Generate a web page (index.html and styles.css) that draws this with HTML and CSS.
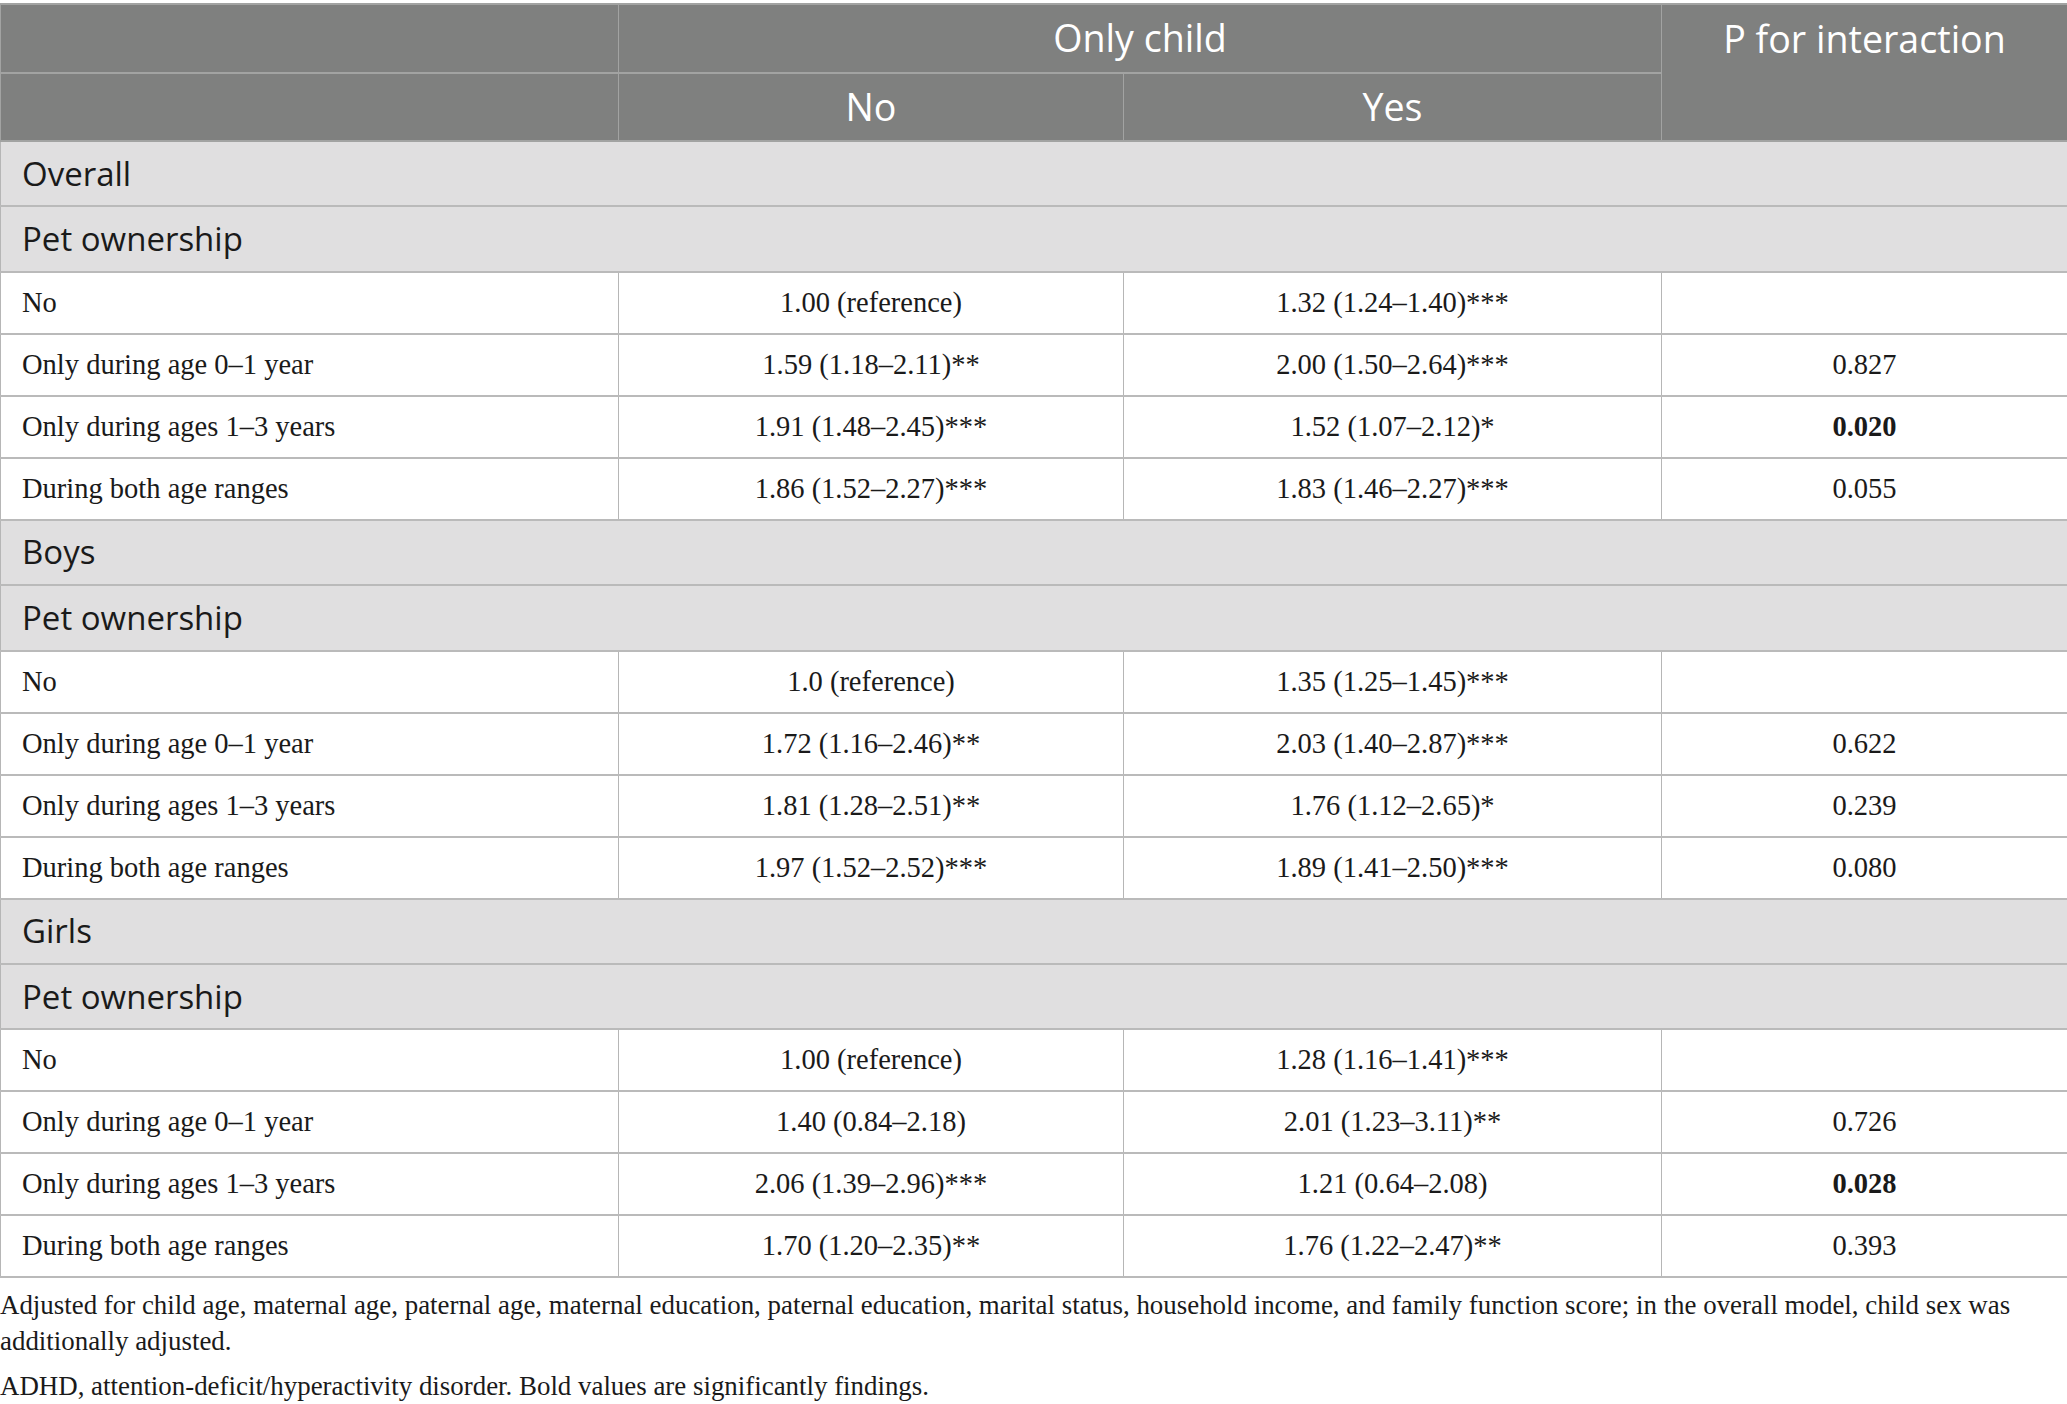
FILE: index.html
```html
<!DOCTYPE html>
<html>
<head>
<meta charset="utf-8">
<link rel="stylesheet" href="styles.css">
</head>
<body>
<div class="wrap">
<table class="tbl">
  <colgroup>
    <col class="c1"><col class="c2"><col class="c3"><col class="c4">
  </colgroup>
  <thead>
    <tr>
      <th class="blank"></th>
      <th colspan="2">Only child</th>
      <th rowspan="2" class="ptop">P for interaction</th>
    </tr>
    <tr>
      <th class="blank"></th>
      <th>No</th>
      <th>Yes</th>
    </tr>
  </thead>
  <tbody>
    <tr class="group"><td colspan="4">Overall</td></tr>
    <tr class="group"><td colspan="4">Pet ownership</td></tr>
    <tr><td class="lbl">No</td><td>1.00 (reference)</td><td>1.32 (1.24–1.40)***</td><td></td></tr>
    <tr><td class="lbl">Only during age 0–1 year</td><td>1.59 (1.18–2.11)**</td><td>2.00 (1.50–2.64)***</td><td>0.827</td></tr>
    <tr><td class="lbl">Only during ages 1–3 years</td><td>1.91 (1.48–2.45)***</td><td>1.52 (1.07–2.12)*</td><td class="b">0.020</td></tr>
    <tr><td class="lbl">During both age ranges</td><td>1.86 (1.52–2.27)***</td><td>1.83 (1.46–2.27)***</td><td>0.055</td></tr>
    <tr class="group"><td colspan="4">Boys</td></tr>
    <tr class="group"><td colspan="4">Pet ownership</td></tr>
    <tr><td class="lbl">No</td><td>1.0 (reference)</td><td>1.35 (1.25–1.45)***</td><td></td></tr>
    <tr><td class="lbl">Only during age 0–1 year</td><td>1.72 (1.16–2.46)**</td><td>2.03 (1.40–2.87)***</td><td>0.622</td></tr>
    <tr><td class="lbl">Only during ages 1–3 years</td><td>1.81 (1.28–2.51)**</td><td>1.76 (1.12–2.65)*</td><td>0.239</td></tr>
    <tr><td class="lbl">During both age ranges</td><td>1.97 (1.52–2.52)***</td><td>1.89 (1.41–2.50)***</td><td>0.080</td></tr>
    <tr class="group"><td colspan="4">Girls</td></tr>
    <tr class="group"><td colspan="4">Pet ownership</td></tr>
    <tr><td class="lbl">No</td><td>1.00 (reference)</td><td>1.28 (1.16–1.41)***</td><td></td></tr>
    <tr><td class="lbl">Only during age 0–1 year</td><td>1.40 (0.84–2.18)</td><td>2.01 (1.23–3.11)**</td><td>0.726</td></tr>
    <tr><td class="lbl">Only during ages 1–3 years</td><td>2.06 (1.39–2.96)***</td><td>1.21 (0.64–2.08)</td><td class="b">0.028</td></tr>
    <tr><td class="lbl">During both age ranges</td><td>1.70 (1.20–2.35)**</td><td>1.76 (1.22–2.47)**</td><td>0.393</td></tr>
  </tbody>
</table>
<div class="notes">
  <p>Adjusted for child age, maternal age, paternal age, maternal education, paternal education, marital status, household income, and family function score; in the overall model, child sex was additionally adjusted.</p>
  <p>ADHD, attention-deficit/hyperactivity disorder. Bold values are significantly findings.</p>
</div>
</div>
</body>
</html>
```
FILE: styles.css
```css
html, body {
  margin: 0;
  padding: 0;
  background: #ffffff;
}

.wrap {
  padding-top: 3px;
  width: 2067px;
}

.tbl {
  width: 2067px;
  border-collapse: collapse;
  table-layout: fixed;
  color: #1a1a1a;
}

.c1 { width: 618px; }
.c2 { width: 505px; }
.c3 { width: 538px; }
.c4 { width: 406px; }

.tbl th {
  background: #7f807f;
  color: #ffffff;
  font-family: "Open Sans", "Noto Sans", sans-serif;
  font-weight: 400;
  font-size: 37.6px;
  line-height: 48px;
  height: 66.5px;
  padding: 0 10px;
  border-top: 2px solid #a2a3a2;
  border-bottom: 2px solid #a2a3a2;
  border-left: 1px solid #a2a3a2;
  border-right: 1px solid #a2a3a2;
  text-align: center;
  vertical-align: middle;
}

.tbl th.ptop {
  vertical-align: top;
  padding-top: 10px;
}

.tbl td {
  font-family: "Liberation Serif", "Times New Roman", serif;
  font-size: 28.5px;
  line-height: 36px;
  height: 60px;
  padding: 0 10px;
  border-top: 2px solid #bababa;
  border-bottom: 2px solid #bababa;
  border-left: 1px solid #b6b6b6;
  border-right: 1px solid #b6b6b6;
  text-align: center;
  vertical-align: middle;
}

.tbl td.lbl {
  text-align: left;
  padding-left: 21px;
}

.tbl td.b {
  font-weight: 700;
}

.tbl tr.group td {
  background: #e0dfe0;
  font-family: "Open Sans", "Noto Sans", sans-serif;
  font-size: 33px;
  line-height: 44px;
  height: 63.4px;
  text-align: left;
  padding-left: 21px;
  color: #1a1a1a;
}

.notes {
  padding-top: 9px;
}

.notes p {
  margin: 0;
  font-family: "Liberation Serif", "Times New Roman", serif;
  font-size: 26.9px;
  line-height: 36px;
  color: #1a1a1a;
}

.notes p + p {
  margin-top: 9px;
}
```
